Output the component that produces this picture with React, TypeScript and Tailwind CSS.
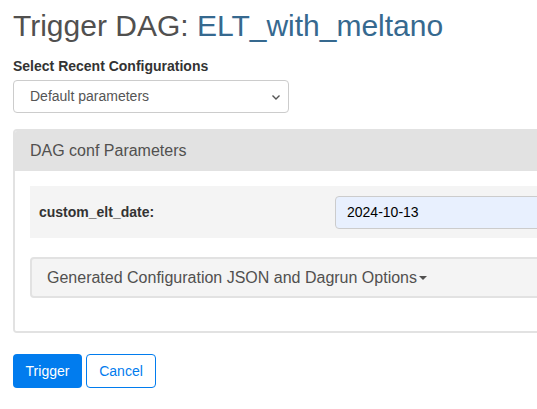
export default function App() {
  return (
    <div className="w-[537px] h-[409px] overflow-hidden bg-white font-['Liberation_Sans',Arial,sans-serif] text-[#51504f]">
      <div className="w-[760px] pl-[13px] pt-[6px]">
        <h2 className="text-[30px] leading-[40px] font-normal">
          Trigger DAG: <span className="text-[#36698f]">ELT_with_meltano</span>
        </h2>

        <label className="block mt-[12px] text-[14px] leading-[16px] font-bold text-[#333]">
          Select Recent Configurations
        </label>
        <div className="relative mt-[6px] w-[276px] h-[33px] rounded-[4px] border border-[#ccc] bg-white flex items-center">
          <span className="pl-[16px] text-[14px] text-[#555]">Default parameters</span>
          <svg className="absolute right-[7px] top-[13px] w-[10px] h-[7px]" viewBox="0 0 10 7" fill="none" stroke="#555" strokeWidth={1.4}>
            <path d="M1.5 1.5 L5 5 L8.5 1.5" />
          </svg>
        </div>

        <div className="mt-[16px] rounded-[4px] border-2 border-[#e2e2e2] overflow-hidden">
          <div className="h-[40px] bg-[#e2e2e2] flex items-center pl-[15px] text-[16px] text-[#51504f]">
            DAG conf Parameters
          </div>
          <div className="px-[15px] pt-[15px] pb-[33px] bg-white">
            <div className="h-[52px] bg-[#f4f4f4] flex items-center">
              <span className="w-[305px] pl-[9px] text-[14px] font-bold text-[#333]">custom_elt_date:</span>
              <div className="h-[33px] w-[400px] rounded-[4px] border border-[#ccc] bg-[#e8f0fe] flex items-center pl-[11px] text-[14px] text-black">
                2024-10-13
              </div>
            </div>
            <div className="mt-[19px] h-[41px] rounded-[4px] border-2 border-[#e2e2e2] bg-[#f4f4f4] flex items-center pl-[15px] text-[16px] text-[#51504f]">
              Generated Configuration JSON and Dagrun Options
              <span className="ml-[2px] mt-[1px] inline-block w-0 h-0 border-l-[4px] border-r-[4px] border-t-[4px] border-l-transparent border-r-transparent border-t-[#51504f]" />
            </div>
          </div>
        </div>

        <div className="mt-[21px] flex gap-[4px]">
          <button className="w-[69px] h-[34px] rounded-[4px] bg-[#017cee] text-white text-[14px]">Trigger</button>
          <button className="w-[70px] h-[34px] rounded-[4px] border border-[#017cee] bg-white text-[#017cee] text-[14px]">Cancel</button>
        </div>
      </div>
    </div>
  );
}
